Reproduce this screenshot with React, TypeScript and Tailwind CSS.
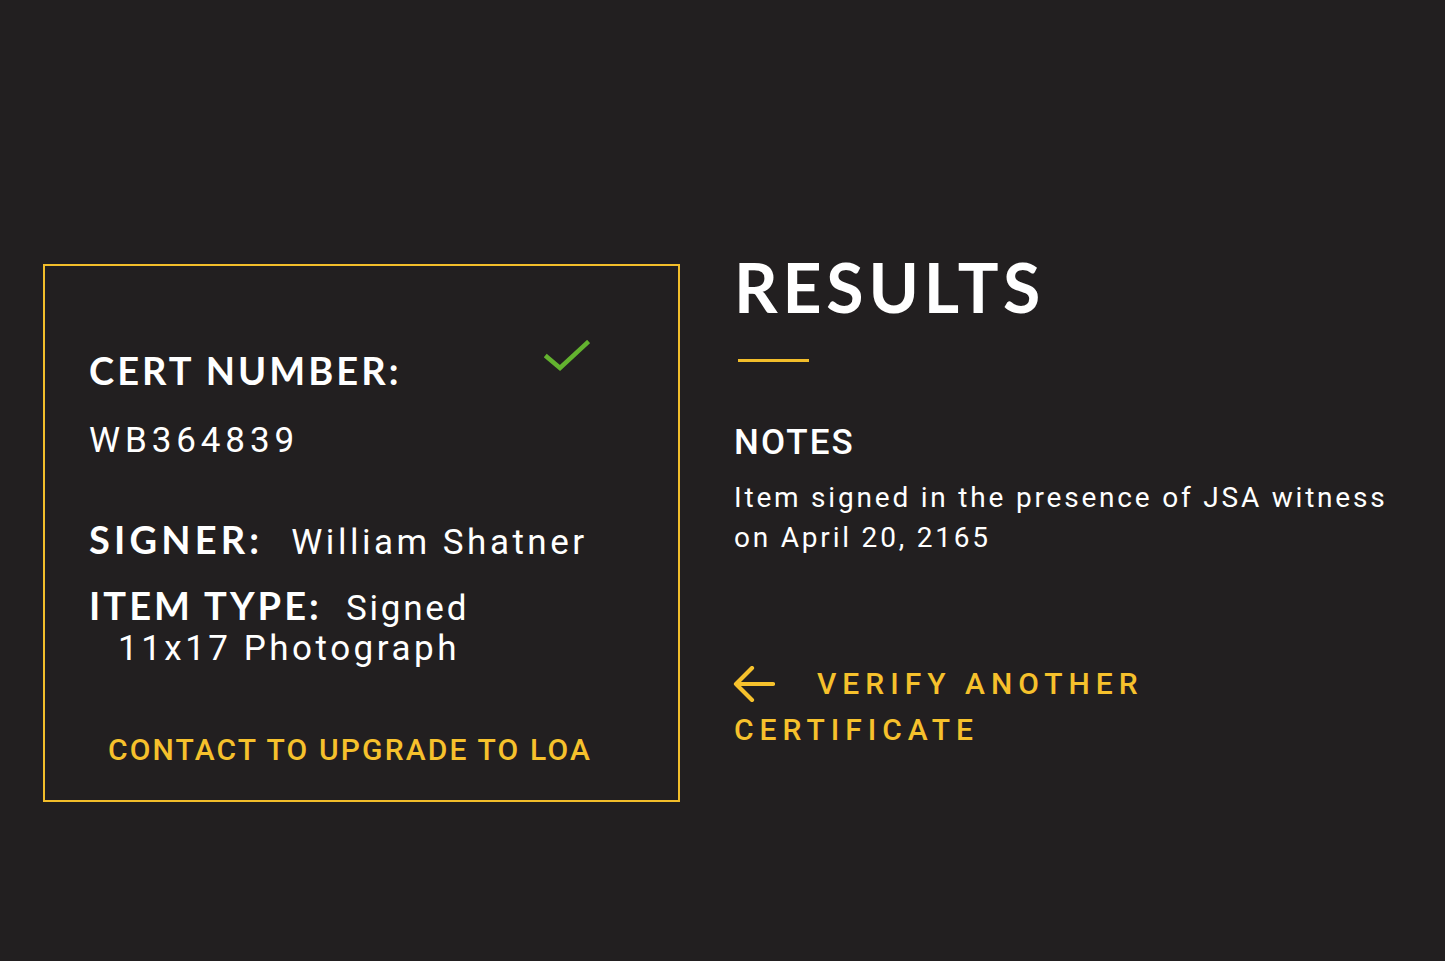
function CheckMark() {
  return (
    <svg width="46" height="32" viewBox="0 0 46 32" fill="none" className="mr-[46px] mt-[-8px]">
      <path d="M3 17 L16 28 L43 3" stroke="#63b22f" strokeWidth="4.5" strokeLinecap="square" />
    </svg>
  );
}

function BackArrow() {
  return (
    <svg width="42" height="36" viewBox="0 0 42 36" fill="none" className="ml-[-1px] mr-[42px]">
      <path d="M40 18 H3 M19 2 L3 18 L19 34" stroke="#f6c12c" strokeWidth="4.2" strokeLinecap="round" strokeLinejoin="round" />
    </svg>
  );
}

function CertCard() {
  return (
    <div className="flex h-[538px] w-[637px] shrink-0 flex-col border-2 border-[#f2bd2a] pl-[44px] pr-[42px] pt-[82px]">
      <div className="flex items-start justify-between">
        <h3 className="font-['Lato',sans-serif] text-[38px] leading-[44px] font-bold tracking-[0.08em] text-white">
          CERT NUMBER:
        </h3>
        <CheckMark />
      </div>
      <p className="mt-[29px] font-['Roboto',sans-serif] text-[35px] leading-[40px] font-normal tracking-[0.14em] text-white">
        WB364839
      </p>

      <div className="mt-[56px] flex items-baseline gap-[28px]">
        <span className="font-['Lato',sans-serif] text-[38px] leading-[44px] font-bold tracking-[0.11em] text-white">
          SIGNER:
        </span>
        <span className="font-['Roboto',sans-serif] text-[35px] leading-[44px] font-normal tracking-[0.1em] text-white">
          William Shatner
        </span>
      </div>

      <div className="mt-[18px] flex items-baseline gap-[24px]">
        <span className="font-['Lato',sans-serif] text-[38px] leading-[44px] font-bold tracking-[0.08em] text-white">
          ITEM TYPE:
        </span>
        <span className="font-['Roboto',sans-serif] text-[35px] leading-[44px] font-normal tracking-[0.08em] text-white">
          Signed
        </span>
      </div>
      <p className="mt-[-2px] pl-[29px] font-['Roboto',sans-serif] text-[35px] leading-[40px] font-normal tracking-[0.1em] text-white">
        11x17 Photograph
      </p>

      <a className="mt-[61px] pl-[19px] whitespace-nowrap font-['Roboto',sans-serif] text-[30px] leading-[40px] font-medium tracking-[0.072em] text-[#f6c12c]">
        CONTACT TO UPGRADE TO LOA
      </a>
    </div>
  );
}

function ResultsPanel() {
  return (
    <div className="flex flex-col pl-[54px]">
      <h1 className="mt-[-20px] font-['Lato',sans-serif] text-[68px] leading-[86px] font-bold tracking-[0.07em] text-white">
        RESULTS
      </h1>
      <div className="ml-[4px] mt-[29px] h-[3px] w-[71px] bg-[#f2bd2a]" />
      <h2 className="mt-[61px] font-['Roboto',sans-serif] text-[35px] leading-[40px] font-medium tracking-[0.06em] text-white">
        NOTES
      </h2>
      <p className="mt-[15px] w-[660px] font-['Roboto',sans-serif] text-[28px] leading-[40px] font-normal tracking-[0.1em] text-white">
        Item signed in the presence of JSA witness on April 20, 2165
      </p>

      <a className="mt-[103px] flex flex-col font-['Roboto',sans-serif] text-[30px] leading-[46px] font-medium tracking-[0.2em] text-[#f6c12c]">
        <span className="flex items-center">
          <BackArrow />
          VERIFY ANOTHER
        </span>
        <span>CERTIFICATE</span>
      </a>
    </div>
  );
}

export default function App() {
  return (
    <div className="flex h-[961px] w-full items-start bg-[#221f20] pl-[43px] pt-[264px]">
      <CertCard />
      <ResultsPanel />
    </div>
  );
}
